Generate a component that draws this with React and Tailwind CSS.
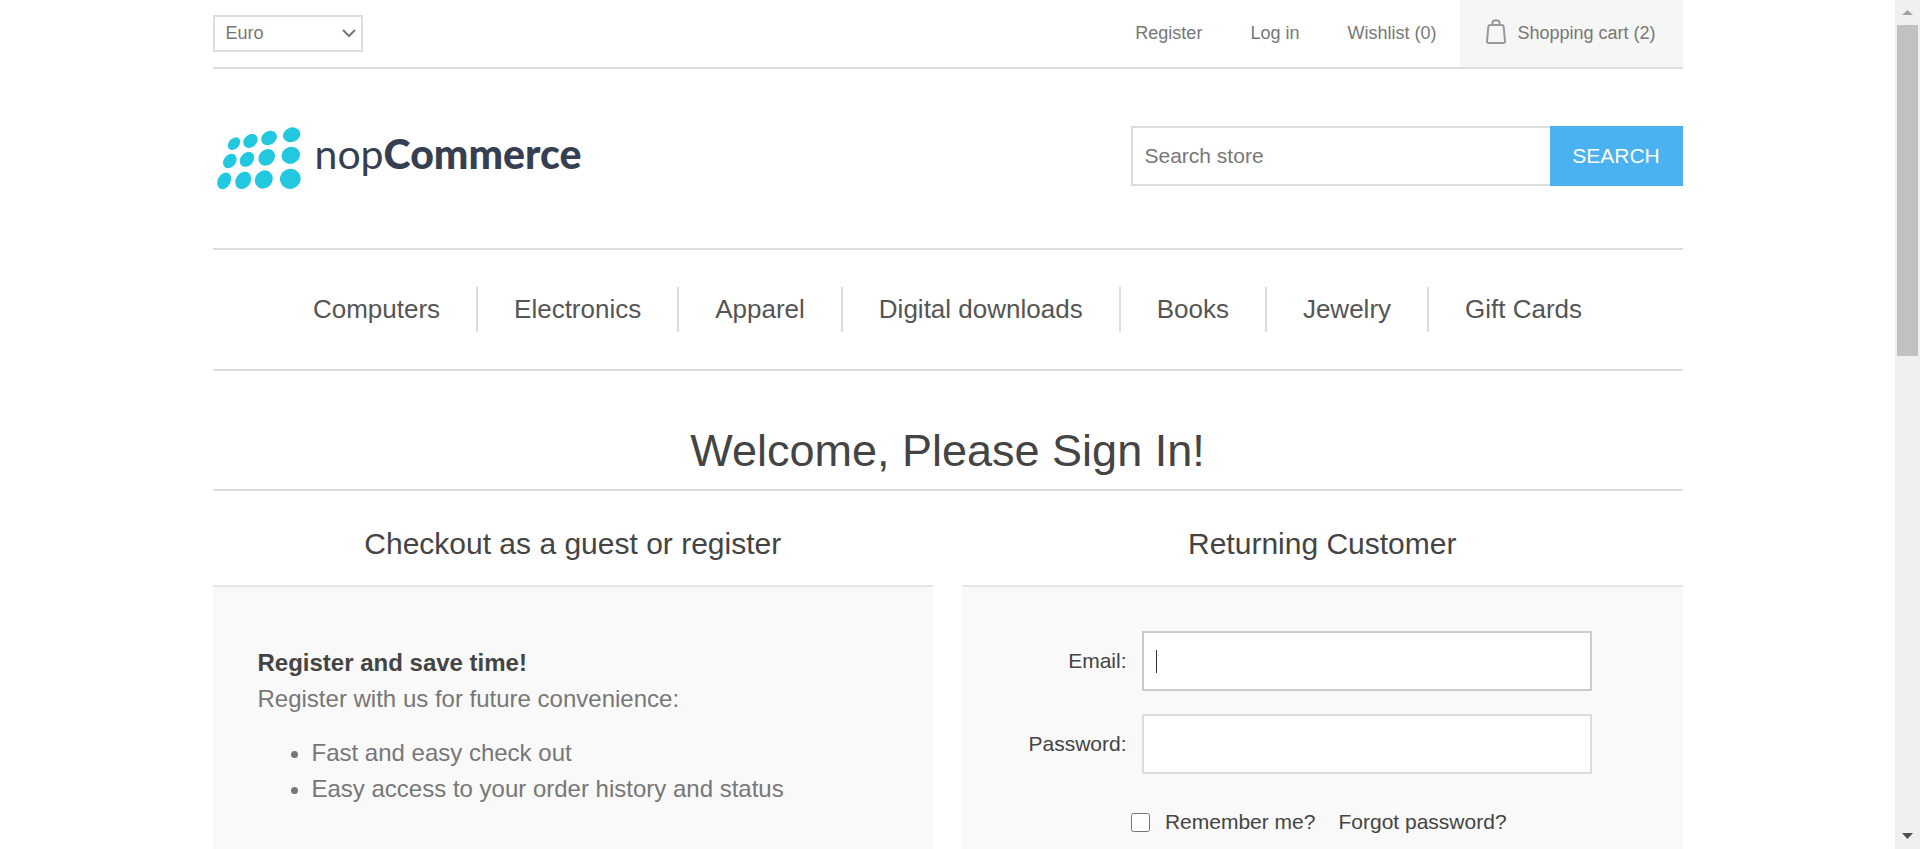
const navItems = ['Computers', 'Electronics', 'Apparel', 'Digital downloads', 'Books', 'Jewelry', 'Gift Cards'];

// [cx, cy, rx, ry, rotation]
const logoDots = [
  [21, 17.6, 7.2, 5.2, -46],
  [37.5, 15, 7.8, 6.2, -40],
  [56, 12, 8.4, 6.8, -35],
  [78.6, 8.8, 8.8, 7.2, -20],
  [16.8, 35, 8, 6, -52],
  [34, 33.4, 8.2, 6.4, -48],
  [53.7, 31.3, 9, 7.6, -45],
  [77.8, 29.3, 9.4, 8.4, -20],
  [11.2, 54.8, 8.8, 6.4, -62],
  [30.2, 54.4, 9.2, 7.4, -55],
  [50.8, 53.5, 9.6, 8.6, -50],
  [77.3, 52.8, 10.4, 10, -20],
];

function Logo() {
  return (
    <a href="#" aria-label="nopCommerce" className="flex items-center">
      <svg width="90" height="64" viewBox="0 0 90 64" fill="#22c7e0" aria-hidden="true">
        {logoDots.map(([cx, cy, rx, ry, r]) => (
          <ellipse key={`${cx}-${cy}`} cx={cx} cy={cy} rx={rx} ry={ry} transform={`rotate(${r} ${cx} ${cy})`} />
        ))}
      </svg>
      <span className="pb-2 pl-3 font-[Lato,sans-serif] text-[41px] leading-[48px] text-[#363f52]">
        <span>nop</span>
        <span className="font-black">Commerce</span>
      </span>
    </a>
  );
}

function BagIcon() {
  return (
    <svg className="mb-1" width="20" height="25" viewBox="0 0 20 25" fill="none" stroke="#999" strokeWidth="2" aria-hidden="true">
      <path d="M4.200 6h11.600c1.300 0 1.700.5 1.800 1.400L19 22.200c.1 1.200-.5 1.800-1.600 1.800H2.600c-1.100 0-1.700-.6-1.600-1.800L2.400 7.400c.1-.9.5-1.400 1.800-1.400z" />
      <path d="M6.500 6V3.800C6.500 2 7.500 1.200 10 1.200s3.500.8 3.500 2.600V6" />
    </svg>
  );
}

function TopBar() {
  return (
    <div className="flex items-center justify-between border-b-2 border-[#ddd] text-[18px] leading-[21px] text-[#777]">
      <div className="relative">
        <select
          aria-label="Currency"
          className="block h-[37px] w-[150px] appearance-none border-2 border-[#ddd] bg-white pl-[11px] text-[#777]"
        >
          <option>Euro</option>
          <option>US Dollar</option>
        </select>
        <svg className="pointer-events-none absolute right-[7px] top-[14px]" width="14" height="9" viewBox="0 0 14 9" fill="none" stroke="#777" strokeWidth="2" aria-hidden="true">
          <path d="M1 1l6 6 6-6" />
        </svg>
      </div>
      <div className="flex items-center">
        <nav aria-label="Account" className="flex gap-12 pr-6">
          <a href="#">Register</a>
          <a href="#">Log in</a>
          <a href="#">Wishlist (0)</a>
        </nav>
        <a href="#" className="flex h-[67px] items-center gap-[11px] bg-[#f6f6f6] pl-[26px] pr-[27px]">
          <BagIcon />
          Shopping cart (2)
        </a>
      </div>
    </div>
  );
}

function SearchBox() {
  return (
    <form className="flex w-[552px]" onSubmit={(e) => e.preventDefault()}>
      <input
        type="text"
        aria-label="Search store"
        placeholder="Search store"
        className="h-[60px] min-w-0 flex-1 border-2 border-r-0 border-[#ddd] px-3 text-[21px] text-[#777] outline-none placeholder:text-[#777]"
      />
      <button type="submit" className="h-[60px] w-[133px] bg-[#4ab2f1] text-[21px] text-white">
        SEARCH
      </button>
    </form>
  );
}

function Field({ id, label, type, active }) {
  return (
    <div className="flex items-center justify-end gap-[15px]">
      <label htmlFor={id}>{label}</label>
      <div className="relative">
        <input
          id={id}
          type={type}
          className={`block h-[60px] w-[450px] border-2 bg-white px-3 text-[21px] caret-transparent outline-none ${active ? 'border-[#ccc]' : 'border-[#ddd]'}`}
        />
        {active && <span className="pointer-events-none absolute left-[14px] top-[19px] h-[23px] w-px bg-[#333]" />}
      </div>
    </div>
  );
}

function Scrollbar() {
  return (
    <div className="flex w-[25px] shrink-0 flex-col items-center justify-between bg-[#f0f0f0]" aria-hidden="true">
      <div className="flex w-full flex-col items-center">
        <svg className="my-[10px]" width="11" height="5" viewBox="0 0 11 6" preserveAspectRatio="none" fill="#a3a3a3">
          <path d="M0 6L5.500 0 11 6z" />
        </svg>
        <div className="h-[331px] w-[21px] bg-[#c1c1c1]" />
      </div>
      <svg className="mb-[10px]" width="11" height="6" viewBox="0 0 11 6" fill="#505050">
        <path d="M0 0h11L5.500 6z" />
      </svg>
    </div>
  );
}

export default function App() {
  return (
    <div className="flex min-h-screen bg-white font-['Liberation_Sans',Arial,sans-serif] text-[#444]">
      <div className="flex min-w-0 flex-1 flex-col">
        <div className="mx-auto flex w-full max-w-[1470px] flex-1 flex-col">
          <header>
            <TopBar />
            <div className="flex items-start justify-between pb-[58px] pt-[57px]">
              <Logo />
              <SearchBox />
            </div>
          </header>
          <nav aria-label="Categories" className="border-y-2 border-[#ddd] py-[37px]">
            <ul className="flex justify-center divide-x-2 divide-[#ddd] text-[26px] leading-[45px] text-[#555]">
              {navItems.map((item) => (
                <li key={item} className="px-9">
                  <a href="#">{item}</a>
                </li>
              ))}
            </ul>
          </nav>
          <main className="flex flex-1 flex-col">
            <h1 className="border-b-2 border-[#ddd] pb-3 pt-[54px] text-center text-[45px] leading-[52px]">
              Welcome, Please Sign In!
            </h1>
            <div className="grid flex-1 grid-cols-2 gap-[29px]">
              <section className="flex flex-col">
                <h2 className="pb-6 pt-9 text-center text-[30px] leading-[34px]">Checkout as a guest or register</h2>
                <div className="flex-1 border-t-2 border-[#e6e6e6] bg-[#f9f9f9] px-[45px] pt-[58px] text-[24px] leading-[36px] text-[#777]">
                  <p className="font-bold text-[#444]">Register and save time!</p>
                  <p>Register with us for future convenience:</p>
                  <ul className="list-disc pl-[54px] pt-[18px]">
                    <li>Fast and easy check out</li>
                    <li>Easy access to your order history and status</li>
                  </ul>
                </div>
              </section>
              <section className="flex flex-col">
                <h2 className="pb-6 pt-9 text-center text-[30px] leading-[34px]">Returning Customer</h2>
                <form
                  className="flex flex-1 flex-col gap-[23px] border-t-2 border-[#e6e6e6] bg-[#f9f9f9] px-[45px] pt-[44px] text-[21px] leading-[24px]"
                  onSubmit={(e) => e.preventDefault()}
                >
                  <div className="flex flex-col gap-[23px] pr-[46px]">
                    <Field id="email" label="Email:" type="email" active />
                    <Field id="password" label="Password:" type="password" />
                  </div>
                  <div className="flex justify-center gap-[23px] pr-[7px] pt-[13px]">
                    <label className="flex items-center gap-[15px]">
                      <input type="checkbox" className="size-[19px]" />
                      Remember me?
                    </label>
                    <a href="#">Forgot password?</a>
                  </div>
                </form>
              </section>
            </div>
          </main>
        </div>
      </div>
      <Scrollbar />
    </div>
  );
}
